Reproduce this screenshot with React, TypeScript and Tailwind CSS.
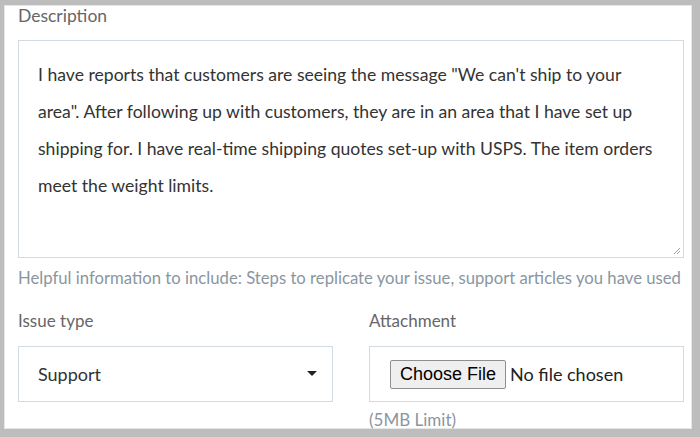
import React from "react";

const font = { fontFamily: "Lato, 'Open Sans', sans-serif" };

const lines = [
  'I have reports that customers are seeing the message "We can\'t ship to your',
  'area". After following up with customers, they are in an area that I have set up',
  "shipping for. I have real-time shipping quotes set-up with USPS. The item orders",
  "meet the weight limits.",
];

export default function App() {
  return (
    <div className="h-[437px] w-[700px] overflow-hidden bg-[#bdbdbd] pl-[4px] pt-[5px]" style={font}>
      <div className="h-[424px] w-[688px] border border-[#e6e6e6] bg-white pl-[13px]">
        <div className="text-[17.5px] leading-[20px] text-[#666]">Description</div>
        <div className="relative mt-[14px] h-[218px] w-[666px] border border-[#d3dae0] bg-white pl-[19px] pt-[15px] text-[17.6px] leading-[37px] text-[#333]">
          {lines.map((line) => (
            <div key={line} className="whitespace-nowrap">
              {line}
            </div>
          ))}
          <svg className="absolute bottom-[2px] right-[2px]" width="8" height="8" viewBox="0 0 8 8">
            <path d="M7 1L1 7M7 4L4 7" stroke="#9aa3a9" strokeWidth="1" />
          </svg>
        </div>
        <div className="mt-[10px] whitespace-nowrap text-[16.7px] leading-[20px] text-[#8a969f]">
          Helpful information to include: Steps to replicate your issue, support articles you have used
        </div>
        <div className="mt-[23px] grid w-[666px] grid-cols-2 gap-x-[36px]">
          <div>
            <div className="text-[17px] leading-[20px] text-[#666]">Issue type</div>
            <div className="mt-[15px] flex h-[56px] items-center justify-between border border-[#d3dae0] pl-[19px] pr-[15px] text-[18px] text-[#333]">
              <span>Support</span>
              <svg width="10" height="6" viewBox="0 0 10 6">
                <path d="M0 0H10L5 5Z" fill="#222" />
              </svg>
            </div>
          </div>
          <div>
            <div className="text-[17px] leading-[20px] text-[#666]">Attachment</div>
            <div className="mt-[15px] flex h-[56px] items-center border border-[#d3dae0] pl-[20px]">
              <span
                className="flex h-[29px] items-center rounded-[2px] border border-[#8f8f8f] bg-[#efefef] px-[9px] text-[18px] text-black"
                style={{ fontFamily: "'Liberation Sans', Arial, sans-serif" }}
              >
                Choose File
              </span>
              <span className="ml-[4px] text-[18px] text-[#222]">No file chosen</span>
            </div>
            <div className="mt-[8px] text-[17px] leading-[20px] text-[#8a969f]">(5MB Limit)</div>
          </div>
        </div>
      </div>
    </div>
  );
}
